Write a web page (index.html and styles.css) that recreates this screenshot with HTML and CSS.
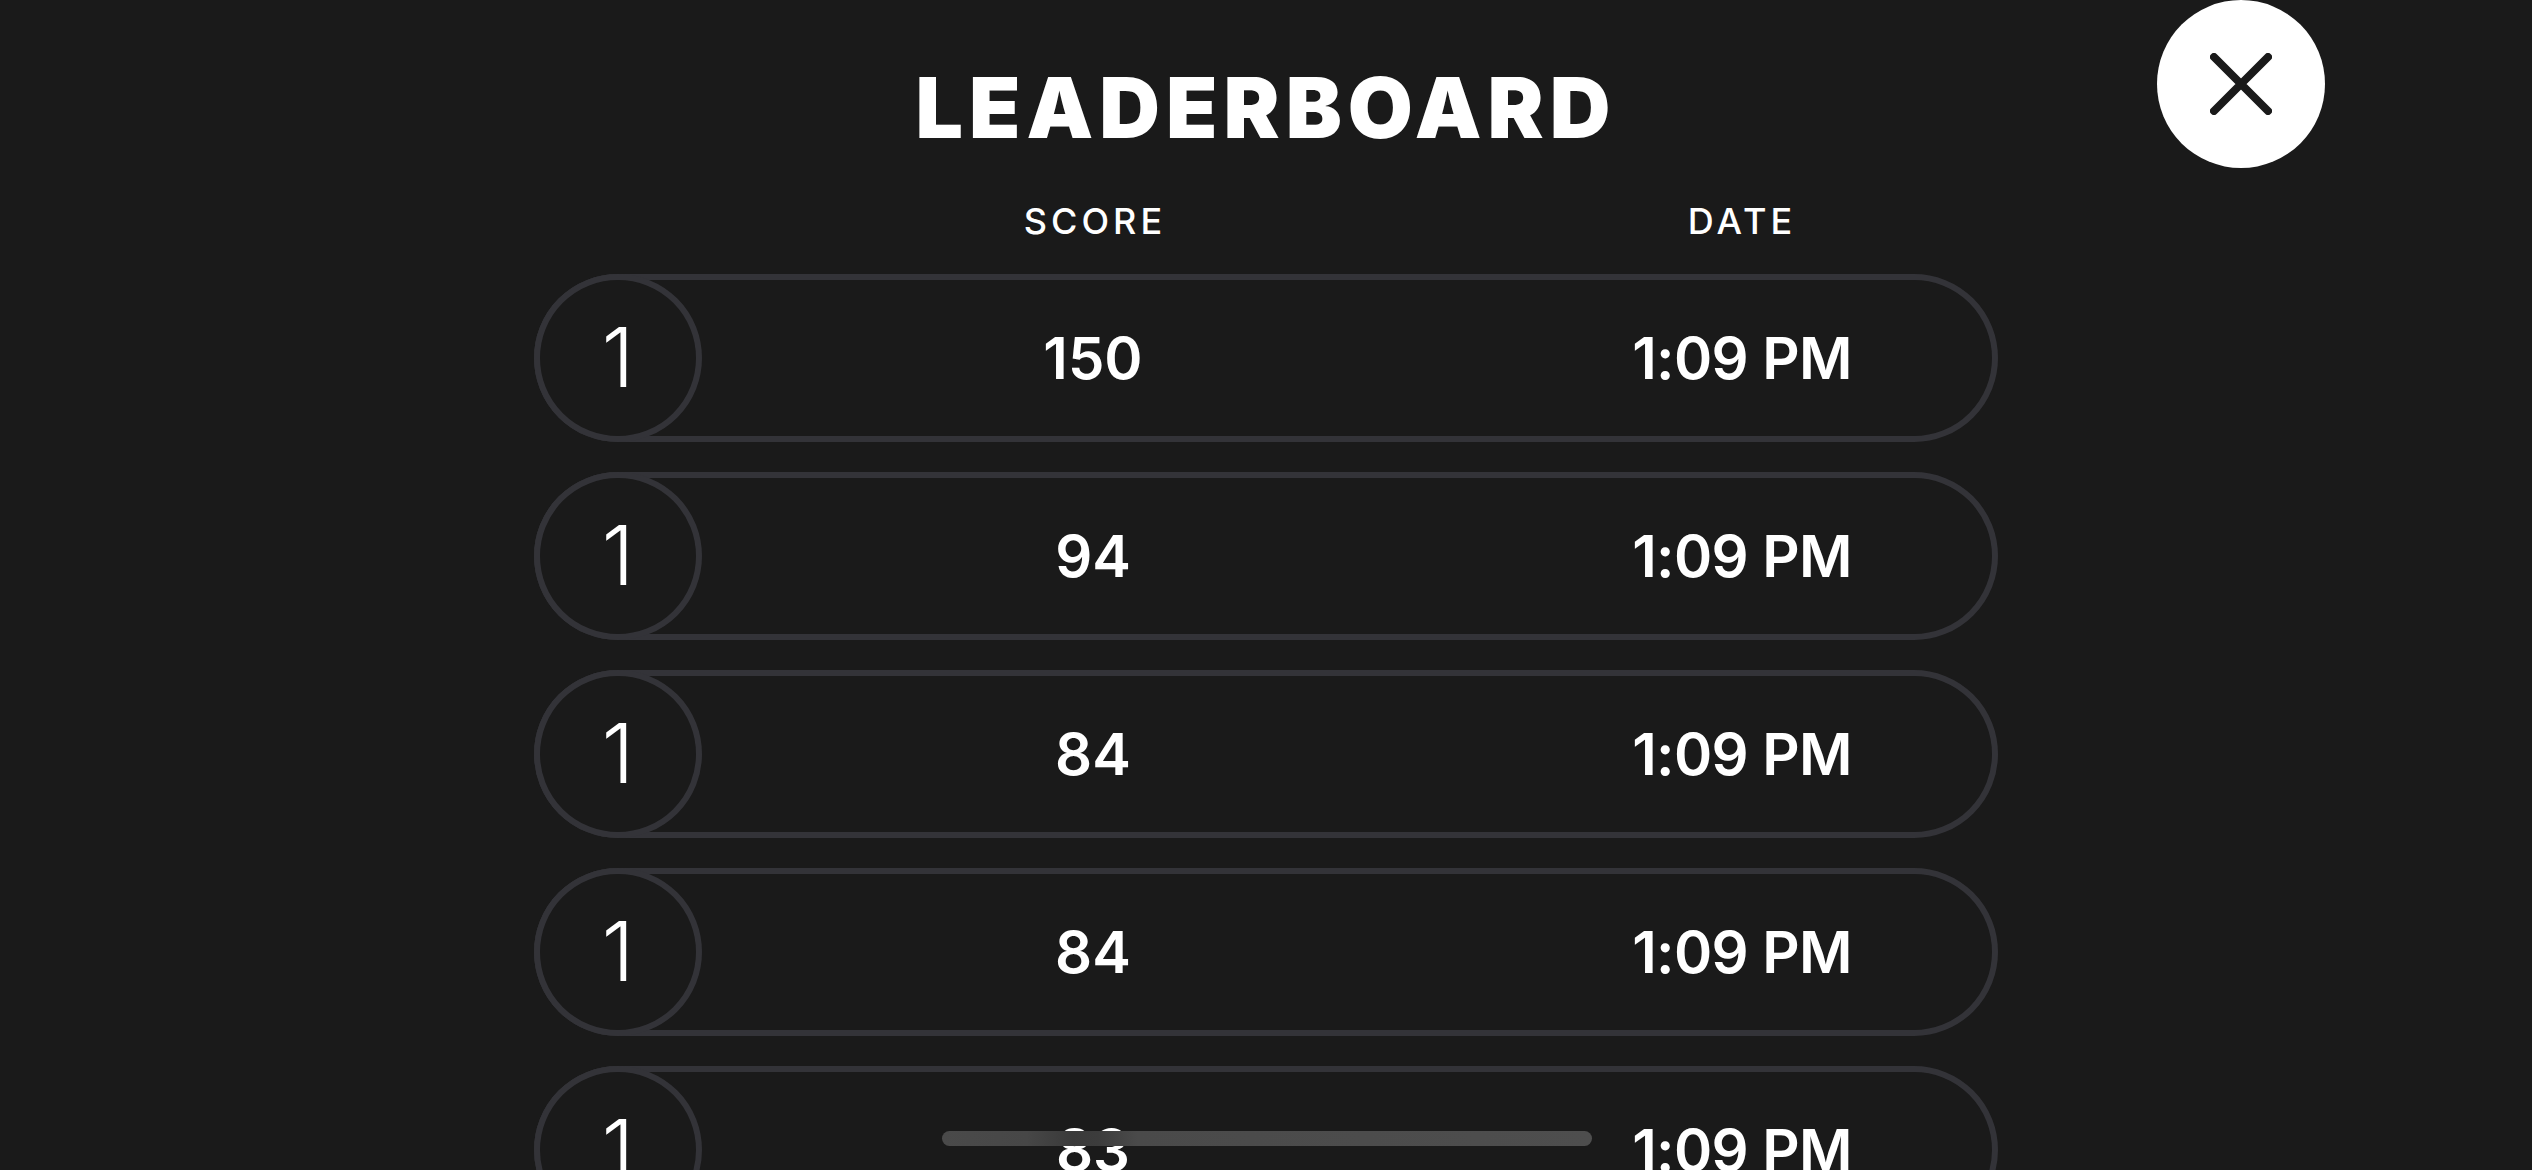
FILE: index.html
```html
<!DOCTYPE html>
<html lang="en">
<head>
<meta charset="utf-8">
<title>Leaderboard</title>
<link rel="stylesheet" href="styles.css">
</head>
<body>
<div class="screen">
  <button class="close" aria-label="Close">
    <svg width="62" height="62" viewBox="0 0 62 62"><path d="M4 4 L58 58 M58 4 L4 58" stroke="#1a1a1a" stroke-width="8" stroke-linecap="round" fill="none"/></svg>
  </button>
  <main class="board">
    <h1 class="title">LEADERBOARD</h1>
    <div class="head">
      <div class="spacer"></div>
      <div class="col score">SCORE</div>
      <div class="col date">DATE</div>
    </div>
    <ul class="rows">
      <li class="row"><span class="rank">1</span><span class="cell score">150</span><span class="cell date">1:09 PM</span></li>
      <li class="row"><span class="rank">1</span><span class="cell score">94</span><span class="cell date">1:09 PM</span></li>
      <li class="row"><span class="rank">1</span><span class="cell score">84</span><span class="cell date">1:09 PM</span></li>
      <li class="row"><span class="rank">1</span><span class="cell score">84</span><span class="cell date">1:09 PM</span></li>
      <li class="row"><span class="rank">1</span><span class="cell score">83</span><span class="cell date">1:09 PM</span></li>
    </ul>
  </main>
  <div class="home-indicator"></div>
</div>
</body>
</html>
```
FILE: styles.css
```css
html, body {
  margin: 0;
  padding: 0;
  background: #1a1a1a;
}
body {
  width: 2532px;
  height: 1170px;
  overflow: hidden;
  font-family: Inter, "Noto Sans", sans-serif;
  color: #ffffff;
}
.screen {
  position: relative;
  width: 2532px;
  height: 1170px;
  overflow: hidden;
}
.close {
  position: absolute;
  top: 0;
  left: 2157px;
  width: 168px;
  height: 168px;
  border: none;
  border-radius: 50%;
  background: #ffffff;
  padding: 0;
  display: flex;
  align-items: center;
  justify-content: center;
}
.board {
  width: 1464px;
  margin: 0 auto;
  padding-top: 66px;
  display: flex;
  flex-direction: column;
}
.title {
  margin: 0;
  font-size: 84px;
  line-height: 1;
  font-weight: 900;
  letter-spacing: 6px;
  text-align: center;
  padding-left: 0;
}
.head {
  display: flex;
  margin-top: 53px;
  font-size: 36px;
  line-height: 1;
  font-weight: 500;
  letter-spacing: 4px;
}
.spacer { flex: 0 0 168px; }
.head .col { text-align: center; padding-left: 4px; }
.head .score { flex: 0 0 778px; }
.head .date { flex: 0 0 508px; }
.rows {
  list-style: none;
  margin: 35px 0 0;
  padding: 0;
  display: flex;
  flex-direction: column;
  gap: 30px;
}
.row {
  box-sizing: border-box;
  height: 168px;
  border: 6px solid #333338;
  border-radius: 84px;
  display: flex;
  align-items: center;
}
.rank {
  box-sizing: border-box;
  flex: 0 0 168px;
  height: 168px;
  margin: -6px 0 -6px -6px;
  border: 6px solid #333338;
  border-radius: 50%;
  background: #1a1a1a;
  display: flex;
  align-items: center;
  justify-content: center;
  font-size: 82px;
  font-weight: 350;
  line-height: 1;
}
.cell {
  text-align: center;
  font-size: 58px;
  font-weight: 600;
  line-height: 1;
}
.cell.score { flex: 0 0 782px; }
.cell.date { flex: 0 0 508px; padding-left: 4px; letter-spacing: -0.6px; }
.home-indicator {
  position: absolute;
  left: 942px;
  top: 1131px;
  width: 650px;
  height: 15px;
  border-radius: 8px;
  background: linear-gradient(90deg, #4a4a4a 0%, #474747 13%, #3a3a3a 20%, #3c3c3c 24%, #4a4a4a 30%, #4e4e4e 100%);
}
```
